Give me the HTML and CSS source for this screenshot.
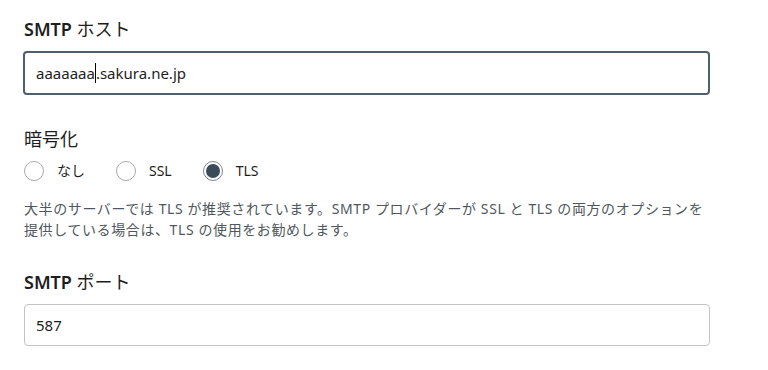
FILE: index.html
```html
<!DOCTYPE html>
<html lang="ja">
<head>
<meta charset="utf-8">
<link rel="stylesheet" href="styles.css">
</head>
<body>
<div class="settings">
  <div class="field">
    <label class="field-label" for="smtp_host"><span class="en">SMTP</span> ホスト</label>
    <div class="text-input is-focused">aaaaaaa<span class="caret"></span>.sakura.ne.jp</div>
  </div>

  <div class="field field-help">
    <div class="field-label">暗号化</div>
    <div class="radio-group">
      <label class="radio"><span class="radio-mark"></span>なし</label>
      <label class="radio"><span class="radio-mark"></span>SSL</label>
      <label class="radio"><span class="radio-mark is-checked"></span>TLS</label>
    </div>
    <p class="help">大半のサーバーでは TLS が推奨されています。SMTP プロバイダーが SSL と TLS の両方のオプションを提供している場合は、TLS の使用をお勧めします。</p>
  </div>

  <div class="field">
    <label class="field-label" for="smtp_port"><span class="en">SMTP</span> ポート</label>
    <div class="text-input">587</div>
  </div>
</div>
</body>
</html>
```

FILE: styles.css
```css
*, *:before, *:after {
  box-sizing: border-box;
}

body {
  margin: 0;
  background: #fff;
  color: #1e1e1e;
  font-family: "Noto Sans", "Noto Sans CJK JP", sans-serif;
  -webkit-font-smoothing: antialiased;
}

.settings {
  width: 710px;
  padding: 17px 0 0 24px;
}

.field {
  margin-bottom: 32px;
}
.field-help {
  margin-bottom: 30px;
}

.field-label {
  display: block;
  font-size: 18px;
  line-height: 24px;
  font-weight: 400;
  color: #1e1e1e;
  margin-bottom: 10px;
}
.field-label .en {
  font-weight: 600;
}

.text-input {
  height: 42px;
  display: flex;
  align-items: center;
  padding: 0 11px;
  border: 1px solid #c3c4c7;
  border-radius: 4px;
  font-size: 15px;
  color: #1e1e1e;
}
.text-input.is-focused {
  height: 44px;
  margin-left: -1px;
  padding-left: 11px;
  border: 2px solid #4f5f6e;
}

.caret {
  display: inline-block;
  width: 1px;
  height: 20px;
  background: #000;
}

.radio-group {
  display: flex;
  gap: 31px;
  margin: 4px 0 17px;
}
.radio {
  display: flex;
  align-items: center;
  gap: 13px;
  font-size: 14px;
  line-height: 20px;
  color: #1e1e1e;
}
.radio-mark {
  width: 20px;
  height: 20px;
  border: 1px solid #a7aaad;
  border-radius: 50%;
  background: #fff;
  position: relative;
}
.radio-mark.is-checked {
  border-color: #7c858e;
}
.radio-mark.is-checked:after {
  content: "";
  position: absolute;
  left: 2px;
  top: 2px;
  width: 14px;
  height: 14px;
  border-radius: 50%;
  background: #3b4b5a;
}

.help {
  max-width: 684px;
  margin: 0;
  font-size: 14px;
  line-height: 21px;
  letter-spacing: 0.6px;
  color: #50575e;
}
```
